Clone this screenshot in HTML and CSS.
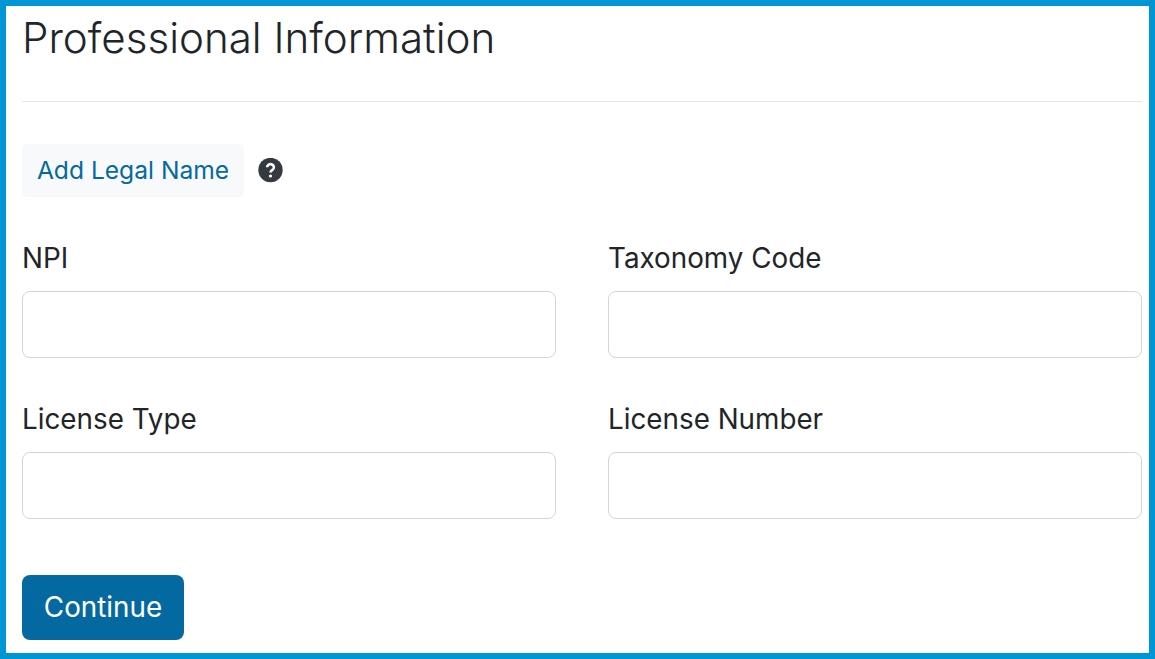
FILE: index.html
```html
<!DOCTYPE html>
<html lang="en">
<head>
    <meta charset="UTF-8">
    <title>Professional Information</title>
    <link rel="stylesheet" href="styles.css">
</head>
<body>
    <div class="frame">
        <h1>Professional Information</h1>
        <hr class="divider">
        <div class="legal-row">
            <button class="legal-btn" type="button">Add Legal Name</button>
            <svg class="help-icon" viewBox="0 0 25 25" width="25" height="25" aria-hidden="true">
                <circle cx="12.5" cy="12" r="12.200" fill="#343a40"/>
                <path d="M9.100 9.300a3.400 3.100 0 1 1 5.300 2.500c-1.200.8-1.900 1.300-1.900 2.600" fill="none" stroke="#ffffff" stroke-width="2.600"/>
                <circle cx="12.500" cy="18" r="1.600" fill="#ffffff"/>
            </svg>
        </div>
        <form class="fields">
            <div class="field">
                <label for="npi">NPI</label>
                <input id="npi" type="text">
            </div>
            <div class="field">
                <label for="taxonomy">Taxonomy Code</label>
                <input id="taxonomy" type="text">
            </div>
            <div class="field">
                <label for="license-type">License Type</label>
                <input id="license-type" type="text">
            </div>
            <div class="field">
                <label for="license-number">License Number</label>
                <input id="license-number" type="text">
            </div>
        </form>
        <button class="continue-btn" type="button">Continue</button>
    </div>
</body>
</html>
```

FILE: styles.css
```css
* {
    box-sizing: border-box;
}
body {
    margin: 0;
    font-family: 'Inter', sans-serif;
    color: #212529;
    background: #ffffff;
}
.frame {
    height: 659px;
    border: 6px solid #0096d6;
    padding: 0 7px 0 16px;
    overflow: hidden;
}
h1 {
    margin: 0;
    padding-top: 7px;
    font-size: 42.100px;
    line-height: 50px;
    font-weight: 300;
}
.divider {
    margin: 38px 0 0;
    border: none;
    border-top: 1px solid #e4e6e8;
}
.legal-row {
    display: flex;
    align-items: center;
    gap: 14px;
    margin-top: 42px;
}
.legal-btn {
    height: 53px;
    width: 222px;
    padding: 0 0 2px;
    border: none;
    border-radius: 5px;
    background: #f8f9fb;
    color: #0569a1;
    font-family: inherit;
    font-size: 24.600px;
}
.help-icon {
    display: block;
}
.fields {
    display: grid;
    grid-template-columns: 534px 534px;
    column-gap: 52px;
    row-gap: 44px;
    margin-top: 44px;
}
.field {
    display: flex;
    flex-direction: column;
}
label {
    font-size: 27.800px;
    line-height: 34px;
    margin-bottom: 16px;
}
input {
    height: 67px;
    border: 1px solid #ced6e0;
    border-radius: 8px;
    background: #ffffff;
}
.continue-btn {
    display: block;
    width: 162px;
    height: 65px;
    margin-top: 56px;
    padding: 0 0 2px;
    border: none;
    border-radius: 8px;
    background: #0569a1;
    color: #ffffff;
    font-family: inherit;
    font-size: 27.800px;
}
```
